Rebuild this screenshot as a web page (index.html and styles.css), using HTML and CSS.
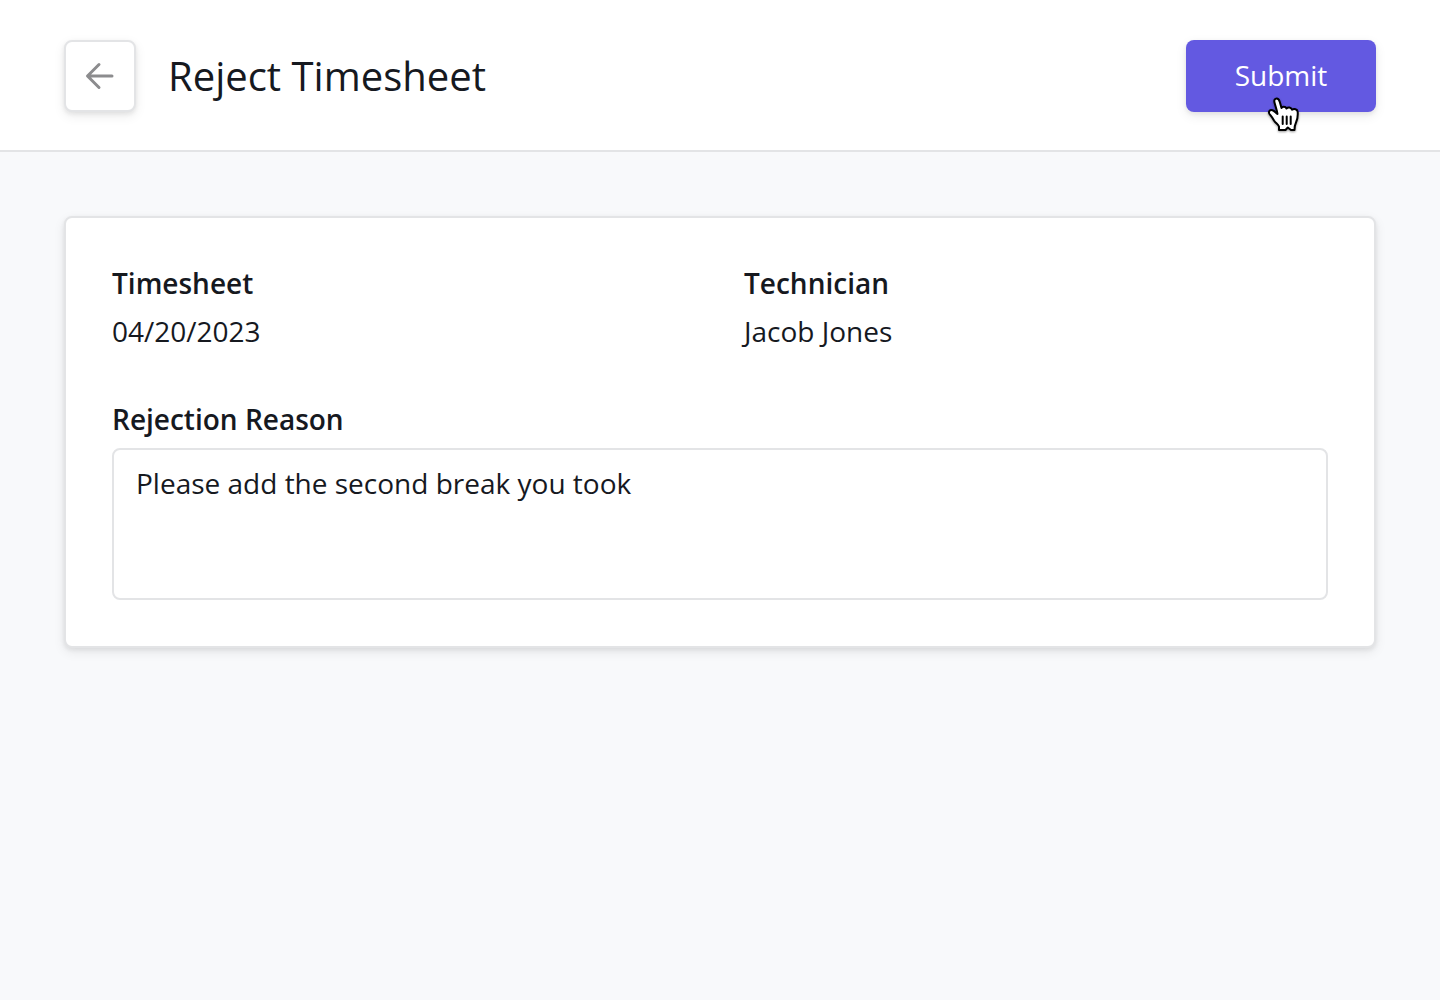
FILE: index.html
```html
<!DOCTYPE html>
<html lang="en">
<head>
    <meta charset="UTF-8">
    <meta name="viewport" content="width=device-width, initial-scale=1.0">
    <title>Reject Timesheet</title>
    <link rel="stylesheet" href="styles.css">
</head>
<body>

    <header class="topbar">
        <button type="button" class="back-btn" aria-label="Back">
            <svg width="32" height="32" viewBox="0 0 32 32" fill="none" stroke="#8c8c8e" stroke-width="3" stroke-linecap="round" stroke-linejoin="round">
                <path d="M28 16H4M15 4.500L3.500 16L15 27.500"/>
            </svg>
        </button>
        <h1>Reject Timesheet</h1>
        <div class="submit-wrap">
            <button type="submit" form="rejectForm" class="submit-btn">Submit</button>
            <!-- hand pointer over the button -->
            <svg class="pointer" width="36" height="38" viewBox="0 0 36 38" fill="#fff" stroke="#000" stroke-width="2" stroke-linejoin="round" stroke-linecap="round">
                <path d="M13 34V30.500C12 28 9.500 27 8 24.500C6.500 21.500 5.500 20.500 3.500 18C2 15.500 4 13.500 6.500 14.300C8.500 15 9.500 16.500 11.500 18C11 14 9.500 10.500 8.500 6.500C7.800 4 9 2.500 10.700 2.500C12.500 2.500 13.200 4 13.800 6L15.500 12C16 10.500 19.500 10.200 20.500 12.500C22 11 25 11.200 26 13.700C28 12.500 31.500 13 31.700 16C32 21 31.500 23.500 30 26.500C29 28.500 28.500 31 28.500 34H25L21.800 31.500L19.500 34Z"/>
                <path d="M16.700 20.500V28M20.700 20.500V28M24.700 20.500V28"/>
            </svg>
        </div>
    </header>

    <main>
        <form id="rejectForm" class="card">
            <dl class="details">
                <div>
                    <dt>Timesheet</dt>
                    <dd>04/20/2023</dd>
                </div>
                <div>
                    <dt>Technician</dt>
                    <dd>Jacob Jones</dd>
                </div>
            </dl>
            <label for="reason">Rejection Reason</label>
            <textarea id="reason" name="reason">Please add the second break you took</textarea>
        </form>
    </main>

</body>
</html>
```
FILE: styles.css
```css
* {
    box-sizing: border-box;
}
body {
    margin: 0;
    background-color: #f8f9fb;
    color: #16191f;
    font-family: "Open Sans", sans-serif;
    font-size: 28px;
    line-height: 48px;
}
.topbar {
    display: flex;
    align-items: center;
    padding: 40px 64px 38px;
    background-color: white;
    border-bottom: 2px solid #e3e4e6;
}
.back-btn, .submit-btn, .card {
    border-radius: 8px;
    box-shadow: 0 2px 4px rgba(22, 25, 31, 0.08), 0 4px 12px rgba(22, 25, 31, 0.08);
}
.back-btn {
    display: flex;
    align-items: center;
    justify-content: center;
    width: 72px;
    height: 72px;
    padding: 0;
    background-color: white;
    border: 2px solid #e3e4e6;
}
h1 {
    margin: 0 0 0 32px;
    font-size: 40px;
    font-weight: 400;
}
.submit-wrap {
    position: relative;
    margin-left: auto;
}
.submit-btn {
    display: block;
    min-width: 190px;
    height: 72px;
    padding: 0 48px 2px;
    background-color: #6359e1;
    color: white;
    border: 0;
    font: inherit;
}
.pointer {
    position: absolute;
    top: 56px;
    left: 80px;
    filter: drop-shadow(0 1px 1px rgba(0, 0, 0, 0.4));
}
main {
    padding: 64px;
}
.card {
    padding: 41px 46px 46px;
    background-color: white;
    border: 2px solid #e3e4e6;
}
.details {
    display: grid;
    grid-template-columns: 1fr 1fr;
    gap: 48px;
    margin: 0 0 40px;
}
dt, label {
    display: block;
    font-weight: 600;
}
dd {
    margin: 0;
}
textarea {
    display: block;
    width: 100%;
    height: 152px;
    margin-top: 5px;
    padding: 9px 22px;
    border: 2px solid #e3e4e6;
    border-radius: 8px;
    background-color: white;
    color: inherit;
    font: inherit;
    resize: none;
}
```
